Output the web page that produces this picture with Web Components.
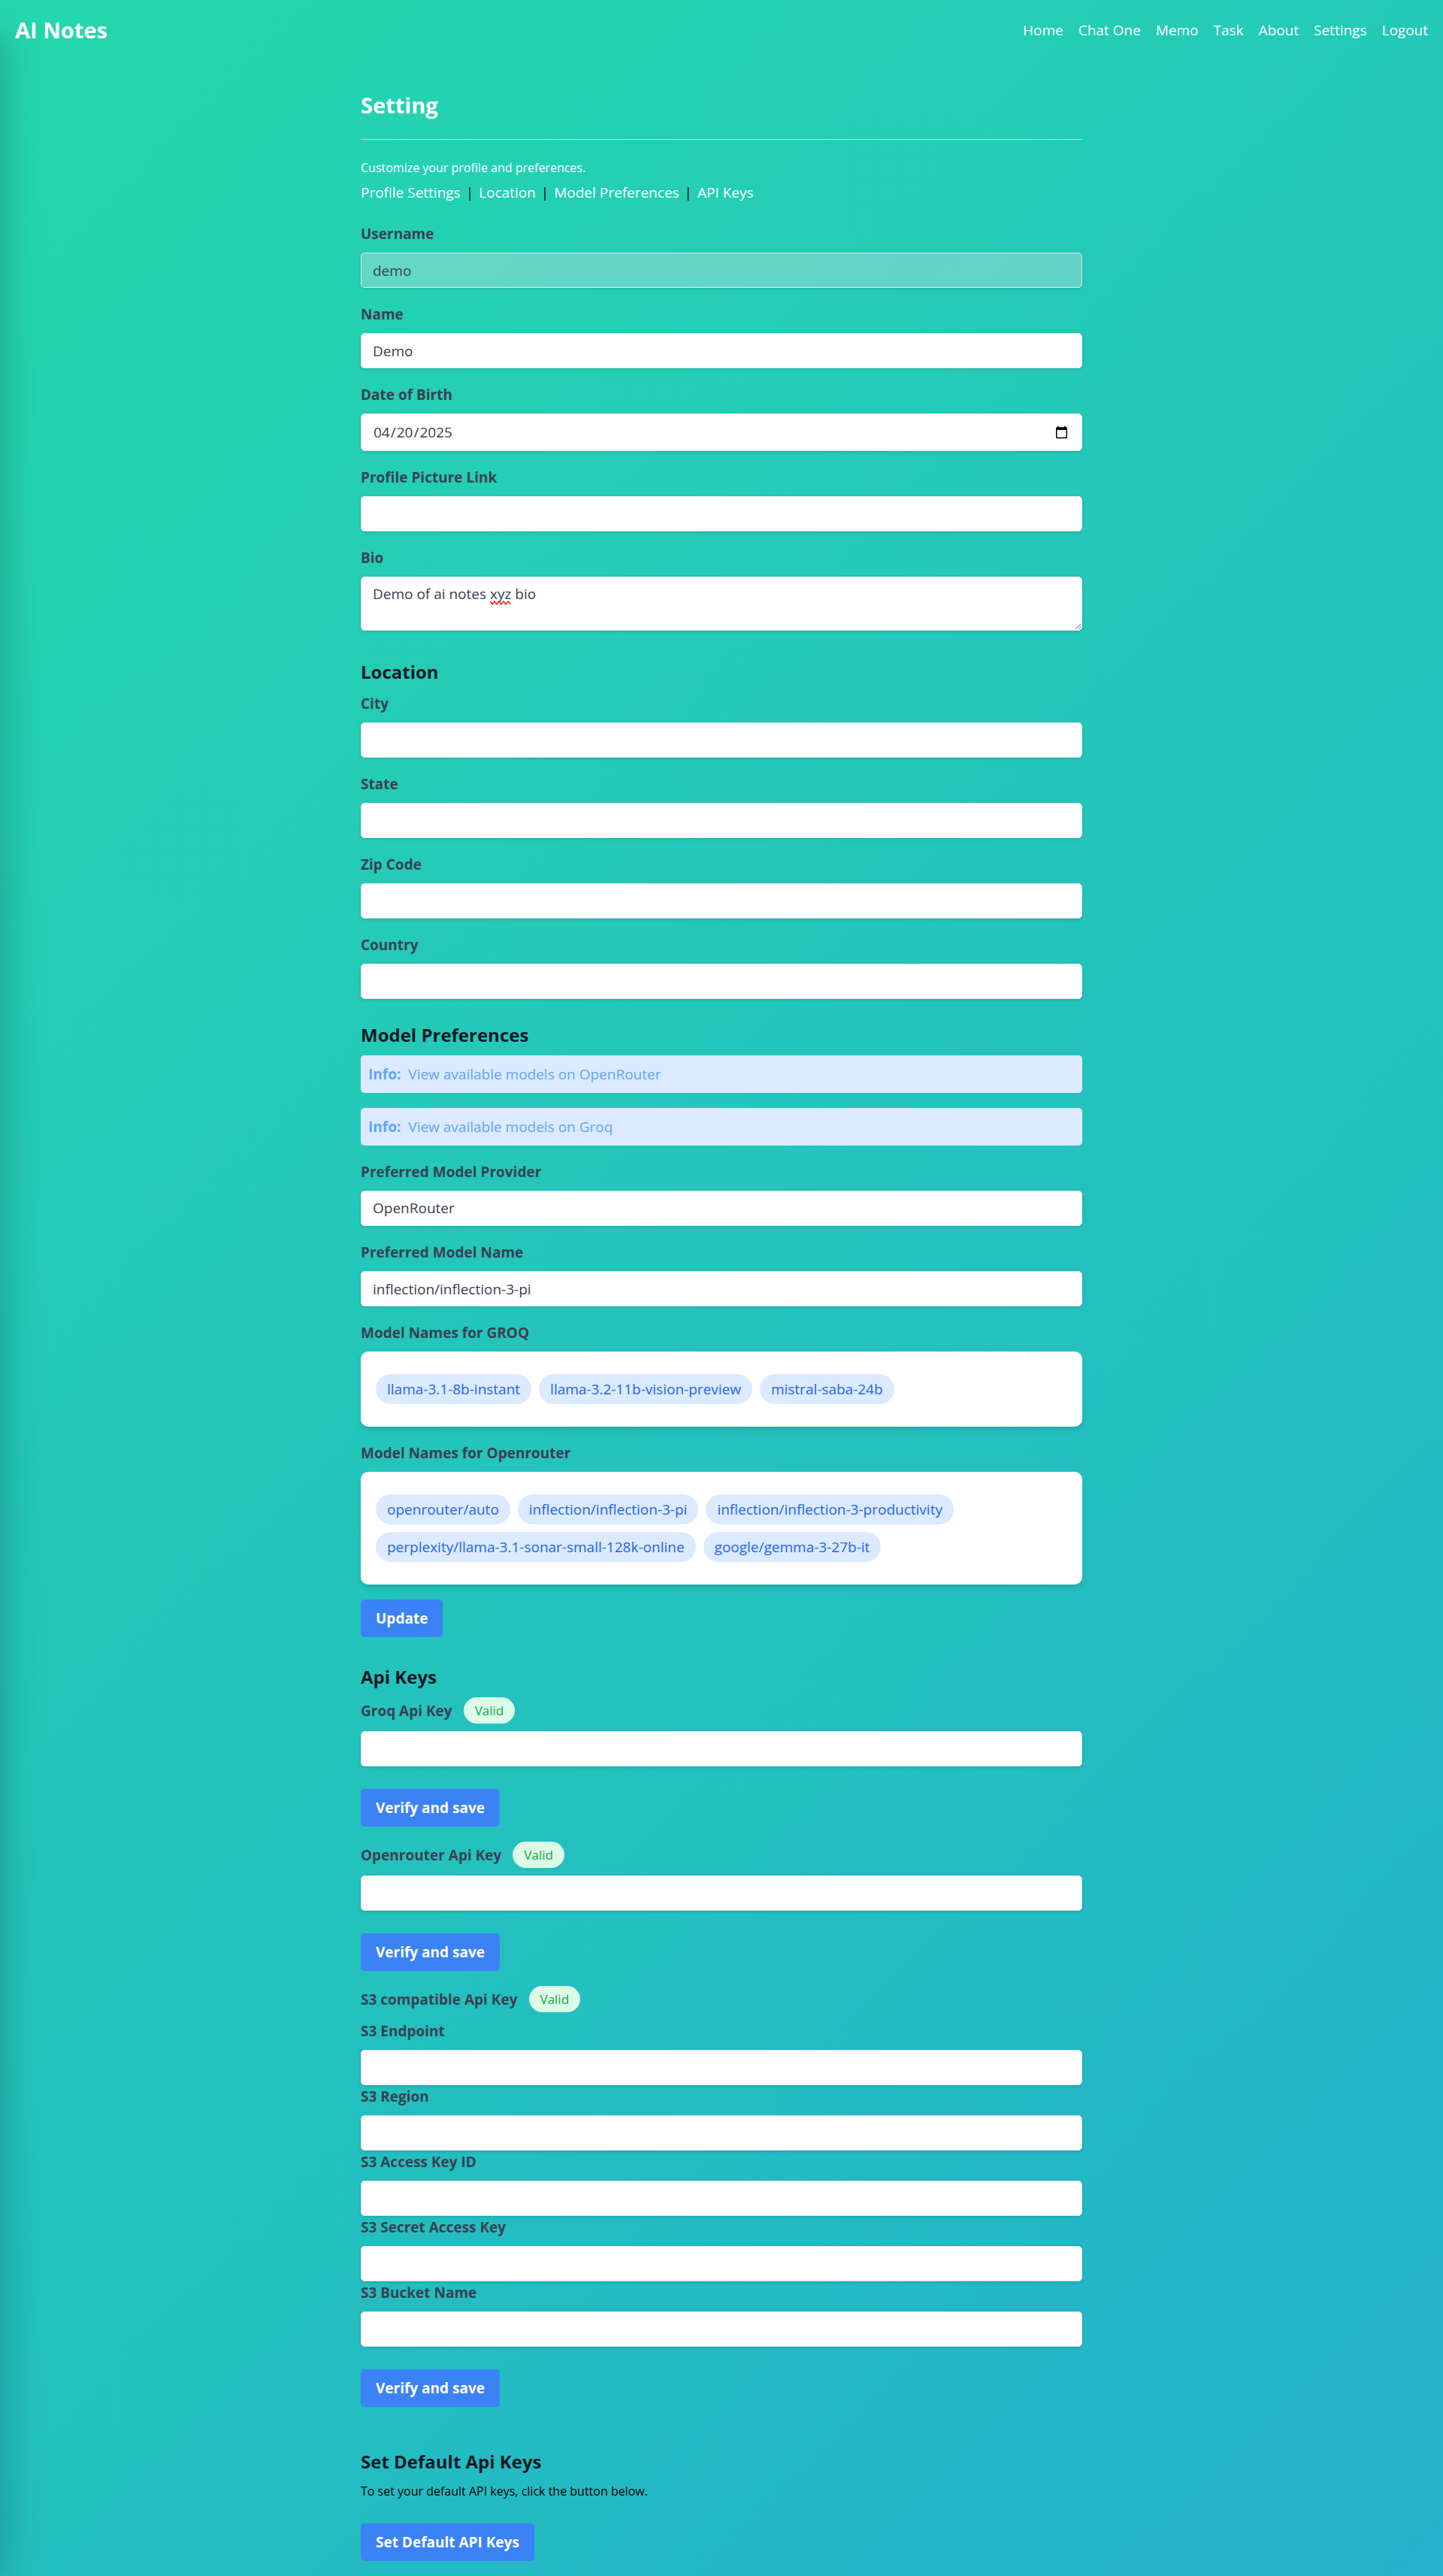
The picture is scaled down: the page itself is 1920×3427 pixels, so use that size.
<!DOCTYPE html>
<html lang="en-US">
<head>
<meta charset="utf-8">
<meta name="viewport" content="width=device-width, initial-scale=1">
<title>AI Notes</title>
<style>
  body {
    margin: 0;
    min-height: 100vh;
    background: linear-gradient(135deg, #24d7ad, #23b1cb);
    font-family: "Open Sans", "Noto Sans", sans-serif;
    font-size: 19px;
    line-height: 30px;
    color: #000;
  }
</style>
</head>
<body>
<notes-app></notes-app>

<script>
const define = (name, markup, setup) => {
  const template = document.createElement('template');
  template.innerHTML = markup;
  customElements.define(name, class extends HTMLElement {
    connectedCallback() {
      if (this.shadowRoot) return;
      this.attachShadow({ mode: 'open' }).append(template.content.cloneNode(true));
      if (setup) setup(this, this.shadowRoot);
    }
  });
};

const controlStyles = `
  :host { display: block; }
  .head { display: flex; align-items: center; gap: 15px; margin-bottom: 10px; }
  label { font-weight: 700; color: #374151; line-height: 30px; }
  .control {
    display: block; box-sizing: border-box; width: 100%; margin: 0;
    padding: 10px 15px; border: 1px solid #e5e7eb; border-radius: 5px;
    background: #fff; color: #374151; font: inherit; line-height: 25px;
    box-shadow: 0 1px 4px rgba(0,0,0,.1), 0 1px 3px -1px rgba(0,0,0,.1);
    appearance: none; outline: none;
  }
  input.control, select.control { height: 47px; }
  input[type=date].control { height: 50px; }
  .control[readonly] { background: rgba(229,231,235,.32); }
`;

/* Off-canvas drawer: only its shadow falls on the page */
define('side-drawer', `
  <style>
    :host {
      position: absolute; top: 46px; bottom: 0; left: -320px; width: 320px;
      box-shadow: 0 0 52px rgba(0,0,0,.25);
      pointer-events: none;
    }
  </style>`);

define('site-header', `
  <style>
    header { display: flex; align-items: center; justify-content: space-between; padding: 20px; }
    a { color: #fff; text-decoration: none; }
    .brand { font-size: 29px; font-weight: 700; line-height: 40px; }
    nav { display: flex; gap: 20px; }
  </style>
  <header>
    <a class="brand" href="#">AI Notes</a>
    <nav>
      <a href="#home">Home</a><a href="#chat">Chat One</a><a href="#memo">Memo</a>
      <a href="#task">Task</a><a href="#about">About</a><a href="#settings">Settings</a>
      <a href="#logout">Logout</a>
    </nav>
  </header>`);

define('page-intro', `
  <style>
    :host { display: block; margin-bottom: 25px; }
    h1 { margin: 0 0 25px; padding-bottom: 25px; border-bottom: 1px solid #d1d5db;
         font-size: 29px; font-weight: 700; line-height: 40px; color: #fff; }
    p { margin: 0 0 5px; font-size: 16px; line-height: 25px; color: #fff; }
    nav { display: flex; gap: 7px; }
    a { color: #fff; text-decoration: none; }
  </style>
  <h1>Setting</h1>
  <p>Customize your profile and preferences.</p>
  <nav>
    <a href="#profile">Profile Settings</a><span>|</span><a href="#location">Location</a><span>|</span><a
      href="#models">Model Preferences</a><span>|</span><a href="#keys">API Keys</a>
  </nav>`);

define('settings-section', `
  <style>
    :host { display: block; }
    h2 { margin: 0 0 10px; font-size: 24px; font-weight: 700; line-height: 35px; color: #111827; }
    .stack { display: flex; flex-direction: column; gap: 20px; }
  </style>
  <h2></h2>
  <div class="stack"><slot></slot></div>`,
  (host, root) => {
    const title = host.getAttribute('heading');
    if (title) root.querySelector('h2').textContent = title;
    else root.querySelector('h2').remove();
  });

define('status-badge', `
  <style>
    :host { display: block; padding: 5px 15px; border-radius: 20px; background: #dcfce7;
            color: #16a34a; font-size: 17px; line-height: 25px; font-weight: 400; }
  </style>
  <slot></slot>`);

define('text-field', `
  <style>${controlStyles}</style>
  <div class="head"><label for="control"></label></div>
  <input class="control" id="control">`,
  (host, root) => {
    root.querySelector('label').textContent = host.getAttribute('label');
    const input = root.querySelector('input');
    input.type = host.getAttribute('type') || 'text';
    input.value = host.getAttribute('value') || '';
    input.readOnly = host.hasAttribute('readonly');
    const status = host.getAttribute('status');
    if (status) {
      const badge = document.createElement('status-badge');
      badge.textContent = status;
      root.querySelector('.head').append(badge);
    }
  });

define('choice-field', `
  <style>${controlStyles}</style>
  <div class="head"><label for="control"></label></div>
  <select class="control" id="control"></select>`,
  (host, root) => {
    root.querySelector('label').textContent = host.getAttribute('label');
    for (const name of host.getAttribute('options').split(',')) root.querySelector('select').add(new Option(name));
  });

/* Text area that underlines one misspelt word */
define('bio-field', `
  <style>${controlStyles}
    :host { margin-bottom: 7px; }
    .area { position: relative; }
    textarea.control { height: 72px; resize: vertical; }
    svg { position: absolute; top: 32px; height: 6px; pointer-events: none; }
  </style>
  <div class="head"><label for="control"></label></div>
  <div class="area">
    <textarea class="control" id="control" spellcheck="false"></textarea>
    <svg fill="none" stroke="#f5141c" stroke-width="1.4"><polyline/></svg>
  </div>`,
  (host, root) => {
    root.querySelector('label').textContent = host.getAttribute('label');
    const area = root.querySelector('textarea'), svg = root.querySelector('svg');
    const text = host.getAttribute('value'), word = host.getAttribute('misspelt');
    area.value = text;
    const ctx = document.createElement('canvas').getContext('2d');
    const style = getComputedStyle(area);
    ctx.font = style.fontSize + ' ' + style.fontFamily;
    const start = ctx.measureText(text.slice(0, text.indexOf(word))).width;
    const width = Math.round(ctx.measureText(word).width);
    svg.style.left = Math.round(start + 16) + 'px';
    svg.style.width = width + 'px';
    let points = '';
    for (let x = 0, up = true; x <= width; x += 3, up = !up) points += x + ',' + (up ? 1 : 5) + ' ';
    root.querySelector('polyline').setAttribute('points', points);
  });

define('info-note', `
  <style>
    :host { display: block; padding: 10px; border-radius: 5px; background: #dbeafe; color: #60a5fa; }
    div { display: flex; gap: 10px; }
    strong { font-weight: 700; }
    a { color: inherit; text-decoration: none; }
  </style>
  <div><strong>Info:</strong><a href="#"><slot></slot></a></div>`);

define('model-list', `
  <style>
    :host { display: block; }
    h3 { margin: 0 0 10px; font-size: inherit; font-weight: 700; line-height: 30px; color: #374151; }
    ul { display: flex; flex-wrap: wrap; gap: 10px; margin: 0; padding: 30px 20px; list-style: none;
         border-radius: 10px; background: #fff;
         box-shadow: 0 5px 8px -1px rgba(0,0,0,.1), 0 3px 5px -3px rgba(0,0,0,.1); }
    li { padding: 5px 15px; border-radius: 20px; background: #dbeafe; color: #2563eb; }
  </style>
  <h3></h3>
  <ul></ul>`,
  (host, root) => {
    root.querySelector('h3').textContent = host.getAttribute('label');
    for (const name of host.getAttribute('models').split(',')) {
      const item = document.createElement('li');
      item.textContent = name;
      root.querySelector('ul').append(item);
    }
  });

define('action-button', `
  <style>
    :host { display: block; }
    button { display: block; margin: 0; padding: 10px 20px; border: 0; border-radius: 5px;
             background: #3b82f6; color: #fff; font: inherit; font-weight: 700; line-height: 30px; cursor: pointer; }
  </style>
  <button type="button"><slot></slot></button>`);

define('key-form', `
  <style>
    :host { display: block; }
    .title { display: flex; align-items: center; gap: 15px; margin-bottom: 10px;
             font-weight: 700; color: #374151; }
    action-button { margin-top: 30px; }
  </style>
  <div class="title"><span></span><status-badge>Valid</status-badge></div>
  <slot></slot>
  <action-button>Verify and save</action-button>`,
  (host, root) => {
    const title = host.getAttribute('heading');
    if (title) root.querySelector('.title span').textContent = title;
    else root.querySelector('.title').remove();
  });

define('notes-app', `
  <style>
    :host { display: block; position: relative; }
    main { max-width: 960px; margin: 0 auto; padding: 40px 20px 20px; }
    .sections { display: flex; flex-direction: column; gap: 30px; }
    .roomy { margin-top: 5px; }
    .apart { margin-top: 25px; }
    p { margin: 0 0 10px; font-size: 16px; line-height: 25px; }
  </style>
  <side-drawer aria-hidden="true"></side-drawer>
  <site-header></site-header>
  <main>
    <page-intro></page-intro>
    <div class="sections">
      <settings-section id="profile">
        <text-field label="Username" value="demo" readonly></text-field>
        <text-field label="Name" value="Demo"></text-field>
        <text-field label="Date of Birth" type="date" value="2025-04-20"></text-field>
        <text-field label="Profile Picture Link"></text-field>
        <bio-field label="Bio" value="Demo of ai notes xyz bio" misspelt="xyz"></bio-field>
      </settings-section>

      <settings-section id="location" heading="Location">
        <text-field label="City"></text-field>
        <text-field label="State"></text-field>
        <text-field label="Zip Code"></text-field>
        <text-field label="Country"></text-field>
      </settings-section>

      <settings-section id="models" heading="Model Preferences">
        <info-note>View available models on OpenRouter</info-note>
        <info-note>View available models on Groq</info-note>
        <choice-field label="Preferred Model Provider" options="OpenRouter,Groq"></choice-field>
        <text-field label="Preferred Model Name" value="inflection/inflection-3-pi"></text-field>
        <model-list label="Model Names for GROQ"
          models="llama-3.1-8b-instant,llama-3.2-11b-vision-preview,mistral-saba-24b"></model-list>
        <model-list label="Model Names for Openrouter"
          models="openrouter/auto,inflection/inflection-3-pi,inflection/inflection-3-productivity,perplexity/llama-3.1-sonar-small-128k-online,google/gemma-3-27b-it"></model-list>
        <action-button>Update</action-button>
      </settings-section>

      <settings-section id="keys" class="roomy" heading="Api Keys">
        <key-form><text-field label="Groq Api Key" status="Valid"></text-field></key-form>
        <key-form><text-field label="Openrouter Api Key" status="Valid"></text-field></key-form>
        <key-form heading="S3 compatible Api Key">
          <text-field label="S3 Endpoint"></text-field>
          <text-field label="S3 Region"></text-field>
          <text-field label="S3 Access Key ID"></text-field>
          <text-field label="S3 Secret Access Key"></text-field>
          <text-field label="S3 Bucket Name"></text-field>
        </key-form>
      </settings-section>

      <settings-section class="apart" heading="Set Default Api Keys">
        <p>To set your default API keys, click the button below.</p>
        <action-button>Set Default API Keys</action-button>
      </settings-section>
    </div>
  </main>`);
</script>
</body>
</html>
